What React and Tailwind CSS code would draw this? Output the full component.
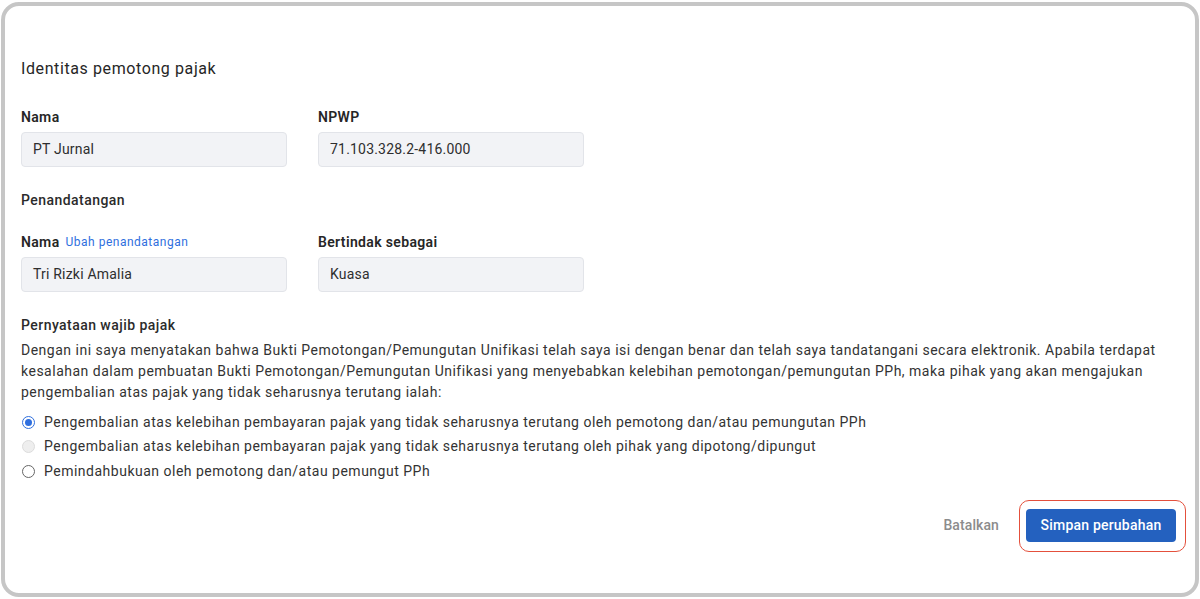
const ff = { fontFamily: 'Roboto, "Liberation Sans", sans-serif' };

function Field({ label, value, extra }) {
  return (
    <div className="w-[266px]">
      <div className="flex items-center gap-[6px] h-[20px]">
        <span className="text-[14px] font-semibold tracking-[0.35px] text-[#262626]">{label}</span>
        {extra && <span className="text-[12px] tracking-[0.5px] text-[#2f6fde]">{extra}</span>}
      </div>
      <div className="mt-[5px] h-[35px] rounded-[4px] border border-[#e2e4e9] bg-[#f2f3f6] px-[11px] flex items-center text-[14px] tracking-[0.2px] text-[#2e2e2e]">
        {value}
      </div>
    </div>
  );
}

function Radio({ state, children }) {
  return (
    <label className="flex items-center h-[24.5px] gap-[9px] text-[14px] tracking-[0.5px] text-[#333]">
      {state === 'checked' && (
        <span className="w-[13px] h-[13px] rounded-full border-[1.5px] border-[#2f6fde] flex items-center justify-center ml-[1px]">
          <span className="w-[7px] h-[7px] rounded-full bg-[#2f6fde]" />
        </span>
      )}
      {state === 'disabled' && (
        <span className="w-[13px] h-[13px] rounded-full border border-[#dcdcdc] bg-[#eeeeee] ml-[1px]" />
      )}
      {state === 'off' && (
        <span className="w-[13px] h-[13px] rounded-full border-[1.2px] border-[#666] bg-white ml-[1px]" />
      )}
      <span>{children}</span>
    </label>
  );
}

export default function App() {
  return (
    <div className="w-[1200px] h-[599px] bg-white pl-[1px] pt-[2px]" style={ff}>
      <div className="w-[1198px] h-[595px] rounded-[18px] border-4 border-[#c6c6c6] bg-white pl-[16px] pr-[19px] pt-[53px]">
        <h2 className="text-[16px] leading-[20px] font-normal tracking-[0.6px] text-[#262626]">Identitas pemotong pajak</h2>

        <div className="mt-[28px] flex gap-[31px]">
          <Field label="Nama" value="PT Jurnal" />
          <Field label="NPWP" value="71.103.328.2-416.000" />
        </div>

        <div className="mt-[23px] text-[14px] leading-[20px] font-medium tracking-[0.45px] text-[#2b2b2b]">Penandatangan</div>

        <div className="mt-[22px] flex gap-[31px]">
          <Field label="Nama" value="Tri Rizki Amalia" extra="Ubah penandatangan" />
          <Field label="Bertindak sebagai" value="Kuasa" />
        </div>

        <div className="mt-[23px] text-[14px] leading-[20px] font-medium tracking-[0.45px] text-[#2b2b2b]">Pernyataan wajib pajak</div>
        <p className="mt-[5px] text-[14px] leading-[21px] tracking-[0.5px] text-[#333] pr-[4px]">
          Dengan ini saya menyatakan bahwa Bukti Pemotongan/Pemungutan Unifikasi telah saya isi dengan benar dan telah saya tandatangani secara elektronik. Apabila terdapat kesalahan dalam pembuatan Bukti Pemotongan/Pemungutan Unifikasi yang menyebabkan kelebihan pemotongan/pemungutan PPh, maka pihak yang akan mengajukan pengembalian atas pajak yang tidak seharusnya terutang ialah:
        </p>

        <div className="mt-[7px] flex flex-col">
          <Radio state="checked">Pengembalian atas kelebihan pembayaran pajak yang tidak seharusnya terutang oleh pemotong dan/atau pemungutan PPh</Radio>
          <Radio state="disabled">Pengembalian atas kelebihan pembayaran pajak yang tidak seharusnya terutang oleh pihak yang dipotong/dipungut</Radio>
          <Radio state="off">Pemindahbukuan oleh pemotong dan/atau pemungut PPh</Radio>
        </div>

        <div className="mt-[25px] flex justify-end items-center gap-[27px]">
          <button className="text-[14px] font-medium tracking-[0.1px] text-[#8c8c8c]">Batalkan</button>
          <div className="relative">
            <span className="absolute -left-[7px] -right-[10px] -top-[9px] -bottom-[10px] rounded-[10px] border-[1.5px] border-[#e4503c]" />
            <button className="relative h-[33px] w-[150px] rounded-[4px] bg-[#2461bf] text-[14px] font-medium tracking-[0.2px] text-white">
              Simpan perubahan
            </button>
          </div>
        </div>
      </div>
    </div>
  );
}
